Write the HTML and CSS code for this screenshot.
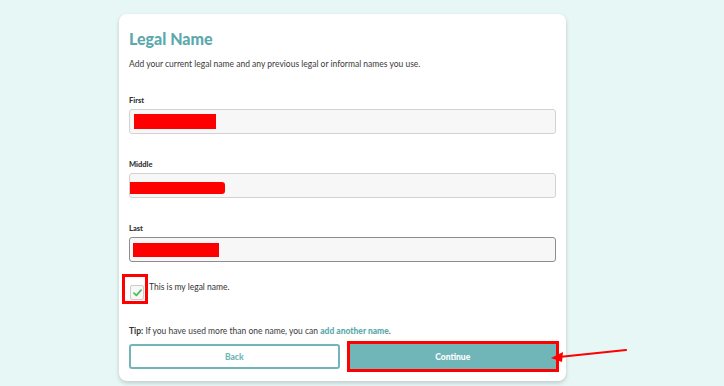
FILE: index.html
```html
<!DOCTYPE html>
<html lang="en">
<head>
    <meta charset="UTF-8">
    <meta name="viewport" content="width=device-width, initial-scale=1.0">
    <title>Legal Name</title>
    <link rel="stylesheet" href="styles.css">
</head>
<body>

    <div class="card">
        <h1 class="title">Legal Name</h1>
        <p class="intro">Add your current legal name and any previous legal or informal names you use.</p>

        <div class="field">
            <label class="field-label">First</label>
            <div class="input"><span class="redact redact-first"></span></div>
        </div>

        <div class="field">
            <label class="field-label">Middle</label>
            <div class="input"><span class="redact redact-middle"></span></div>
        </div>

        <div class="field">
            <label class="field-label">Last</label>
            <div class="input input-focus"><span class="redact redact-last"></span></div>
        </div>

        <!-- Case à cocher, entourée en rouge -->
        <div class="check-row">
            <span class="check-mark">
                <span class="checkbox">
                    <svg width="9" height="8" viewBox="0 0 9 8"><path d="M1 4.2 L3.4 6.4 L8 1.2" fill="none" stroke="#4cc15a" stroke-width="1.8" stroke-linecap="round" stroke-linejoin="round"/></svg>
                </span>
            </span>
            <span class="check-text">This is my legal name.</span>
        </div>

        <p class="tip"><b>Tip:</b> If you have used more than one name, you can <a href="#">add another name</a>.</p>

        <div class="actions">
            <button class="btn btn-back">Back</button>
            <button class="btn btn-continue">Continue</button>
        </div>
    </div>

    <!-- Flèche d'annotation -->
    <svg class="arrow" width="80" height="20" viewBox="0 0 80 20">
        <path d="M77 4 L10 11" stroke="#ff0000" stroke-width="2.2" stroke-linecap="round"/>
        <path d="M2 12 L14 6 L13 16 Z" fill="#ff0000"/>
    </svg>

</body>
</html>
```

FILE: styles.css
```css
body {
    font-family: 'Lato', 'Open Sans', sans-serif;
    background-color: #e7f7f6;
    color: #333;
    margin: 0;
    padding: 0;
    position: relative;
    height: 386px;
    overflow: hidden;
}

.card {
    width: 427px;
    margin: 14px 0 0 119px;
    padding: 14px 10px 12px;
    background-color: #fff;
    border-radius: 8px;
    box-shadow: 0 2px 4px rgba(0, 0, 0, 0.18);
}

.title {
    margin: 0;
    font-size: 16px;
    line-height: 22px;
    font-weight: 900;
    color: #5ca9ad;
}

.intro {
    margin: 8px 0 0;
    font-size: 8.5px;
    line-height: 12px;
    color: #3a3a3a;
}

.field {
    margin-top: 26px;
}

.field-label {
    display: block;
    font-size: 7.5px;
    line-height: 10px;
    font-weight: 900;
    color: #333;
    margin-bottom: 3px;
}

.input {
    height: 23px;
    border: 1px solid #d2d2d2;
    border-radius: 3px;
    background-color: #f7f7f7;
    display: flex;
    align-items: center;
}

.input-focus {
    border-color: #8a8e90;
}

.redact {
    display: block;
    background-color: #ff0000;
}

.redact-first {
    width: 82px;
    height: 15px;
    margin-left: 4px;
}

.redact-middle {
    width: 95px;
    height: 12px;
    margin-left: 0;
    margin-top: 4px;
    border-radius: 0 3px 3px 0;
}

.redact-last {
    width: 86px;
    height: 14px;
    margin-left: 3px;
}

.check-row {
    display: flex;
    align-items: flex-start;
    margin-top: 23px;
    margin-left: 1px;
}

.check-mark {
    position: relative;
    display: block;
}

/* Cadre rouge autour de la case */
.check-mark::after {
    content: "";
    position: absolute;
    left: -8px;
    top: -11px;
    width: 20px;
    height: 24px;
    border: 3px solid #ff0000;
}

.checkbox {
    display: flex;
    align-items: center;
    justify-content: center;
    width: 12px;
    height: 13px;
    border: 1px solid #ccc;
    border-radius: 2px;
    background-color: #f7f7f7;
}

.check-text {
    font-size: 8.5px;
    line-height: 10px;
    margin-left: 5px;
    margin-top: -3px;
    color: #333;
}

.tip {
    margin: 25px 0 0;
    font-size: 8.5px;
    line-height: 12px;
    color: #3a3a3a;
}

.tip b {
    color: #333;
}

.tip a {
    color: #5ca9ad;
    font-weight: 900;
    text-decoration: none;
}

.actions {
    display: flex;
    gap: 10px;
    margin-top: 7px;
}

.btn {
    flex: 1;
    height: 25px;
    font-family: 'Lato', 'Open Sans', sans-serif;
    font-size: 8.5px;
    font-weight: 900;
    border-radius: 3px;
    cursor: pointer;
}

.btn-back {
    background-color: #fff;
    color: #72b5b8;
    border: 2px solid #72b5b8;
}

.btn-continue {
    background-color: #70b5b8;
    color: #fff;
    border: none;
    border-radius: 0;
    outline: 3px solid #ff0000;
    outline-offset: 0;
}

.arrow {
    position: absolute;
    left: 549px;
    top: 346px;
}
```
